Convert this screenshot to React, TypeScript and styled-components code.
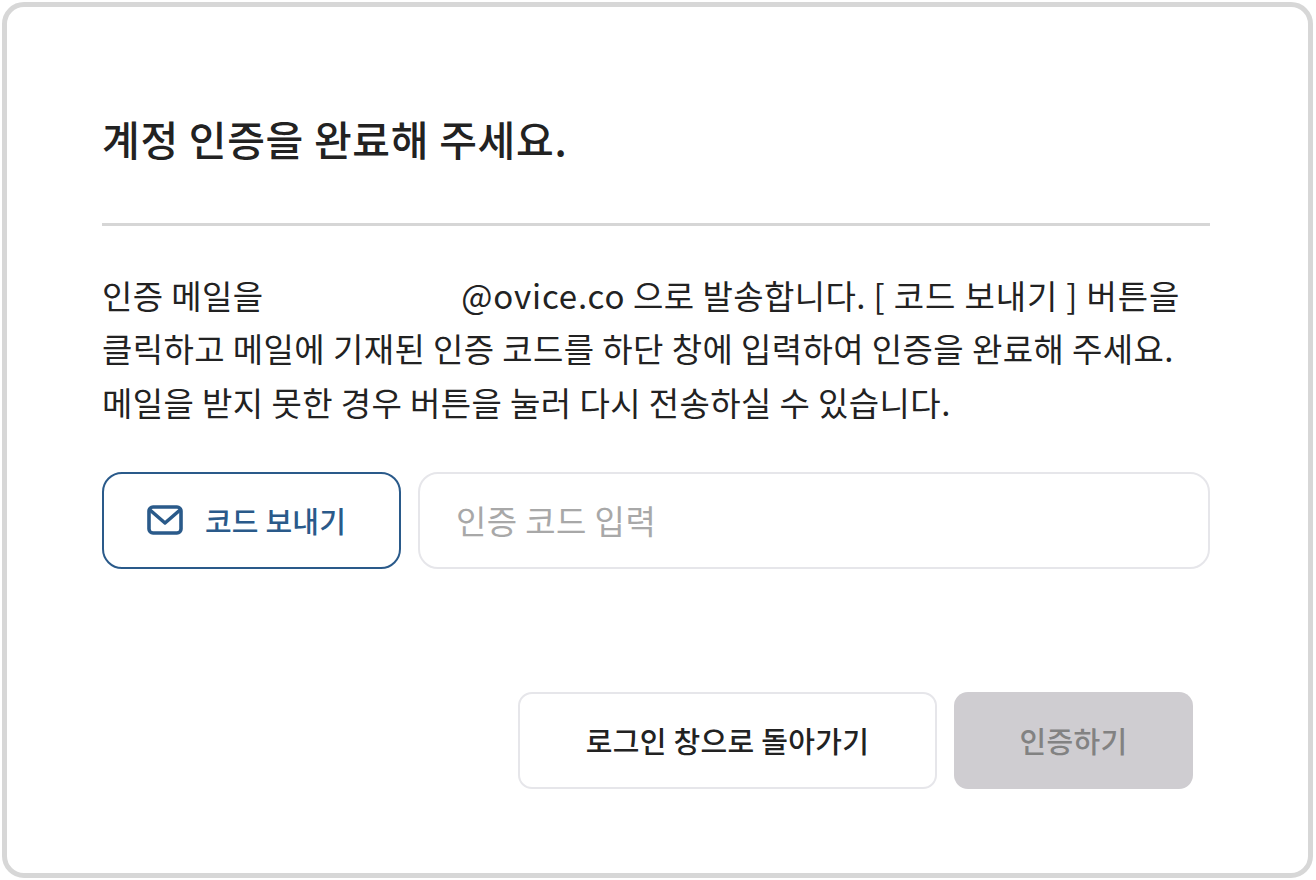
import styled, { createGlobalStyle } from "styled-components";

const GlobalStyle = createGlobalStyle`
  html, body {
    margin: 0;
    padding: 0;
    background: #fff;
  }
  body {
    font-family: "Noto Sans CJK KR", "Noto Sans", sans-serif;
  }
`;

const Card = styled.div`
  box-sizing: border-box;
  width: 1311px;
  height: 876px;
  margin: 2px;
  background: #fff;
  border: 5px solid #d7d7d7;
  border-radius: 22px;
  padding: 103px 98px 0 95px;
  display: flex;
  flex-direction: column;
`;
const Title = styled.h1`
  margin: 0;
  font-size: 41px;
  line-height: 56px;
  font-weight: 500;
  letter-spacing: 0.7px;
  color: #222;
`;
const Divider = styled.hr`
  margin: 57px 0 0;
  border: none;
  height: 3px;
  background: #d6d6d6;
`;
const Message = styled.p`
  margin: 43px 0 0;
  font-size: 33px;
  line-height: 53.3px;
  font-weight: 400;
  letter-spacing: 0.4px;
  color: #222;
  white-space: nowrap;
`;
const Redacted = styled.span`
  display: inline-block;
  width: 182px;
`;
const WideText = styled.span`
  letter-spacing: 0.85px;
`;
const CodeRow = styled.div`
  margin-top: 43px;
  display: flex;
  gap: 17px;
`;
const SendButton = styled.button`
  box-sizing: border-box;
  width: 299px;
  height: 97px;
  flex: none;
  display: flex;
  align-items: center;
  justify-content: center;
  gap: 22px;
  padding: 0 10px 0 0;
  background: #fff;
  border: 2px solid #2a5a8a;
  border-radius: 20px;
  color: #2a5a8a;
  font-family: inherit;
  font-size: 29px;
  font-weight: 500;
  letter-spacing: 0.2px;
`;
const CodeInput = styled.input`
  box-sizing: border-box;
  flex: 1;
  min-width: 0;
  height: 97px;
  padding: 0 36px;
  background: #fff;
  border: 2px solid #e6e6ea;
  border-radius: 20px;
  font-family: inherit;
  font-size: 33px;
  letter-spacing: 0.4px;
  outline: none;
  &::placeholder {
    color: #a8a8a8;
    opacity: 1;
  }
`;
const Actions = styled.div`
  margin-top: 123px;
  padding-right: 17px;
  display: flex;
  justify-content: flex-end;
  gap: 17px;
`;
const ActionButton = styled.button<{ $disabled?: boolean }>`
  box-sizing: border-box;
  width: ${(p) => (p.$disabled ? "239px" : "419px")};
  height: 97px;
  background: ${(p) => (p.$disabled ? "#cfcdd1" : "#fff")};
  border: ${(p) => (p.$disabled ? "none" : "2px solid #e6e6ea")};
  border-radius: 14px;
  color: ${(p) => (p.$disabled ? "#828282" : "#222")};
  font-family: inherit;
  font-size: 29px;
  font-weight: 500;
  letter-spacing: 0.3px;
`;

const MailIcon = () => (
  <svg width="36" height="30" viewBox="0 0 36 30" fill="none" stroke="currentColor" strokeWidth="3.6" strokeLinecap="round" strokeLinejoin="round">
    <rect x="2" y="2" width="32" height="26" rx="4" />
    <path d="M3 5l15 13L33 5" />
  </svg>
);

function App() {
  return (
    <>
      <GlobalStyle />
      <Card>
        <Title>계정 인증을 완료해 주세요.</Title>
        <Divider />
        <Message>
          인증 메일을 <Redacted /> <WideText>@ovice.co</WideText> 으로 발송합니다.{" "}
          <WideText>[ 코드 보내기 ] 버튼을</WideText>
          <br />
          클릭하고 메일에 기재된 인증 코드를 하단 창에 입력하여 인증을 완료해 주세요.
          <br />
          메일을 받지 못한 경우 버튼을 눌러 다시 전송하실 수 있습니다.
        </Message>
        <CodeRow>
          <SendButton>
            <MailIcon />
            코드 보내기
          </SendButton>
          <CodeInput placeholder="인증 코드 입력" />
        </CodeRow>
        <Actions>
          <ActionButton>로그인 창으로 돌아가기</ActionButton>
          <ActionButton $disabled disabled>
            인증하기
          </ActionButton>
        </Actions>
      </Card>
    </>
  );
}

export default App;
